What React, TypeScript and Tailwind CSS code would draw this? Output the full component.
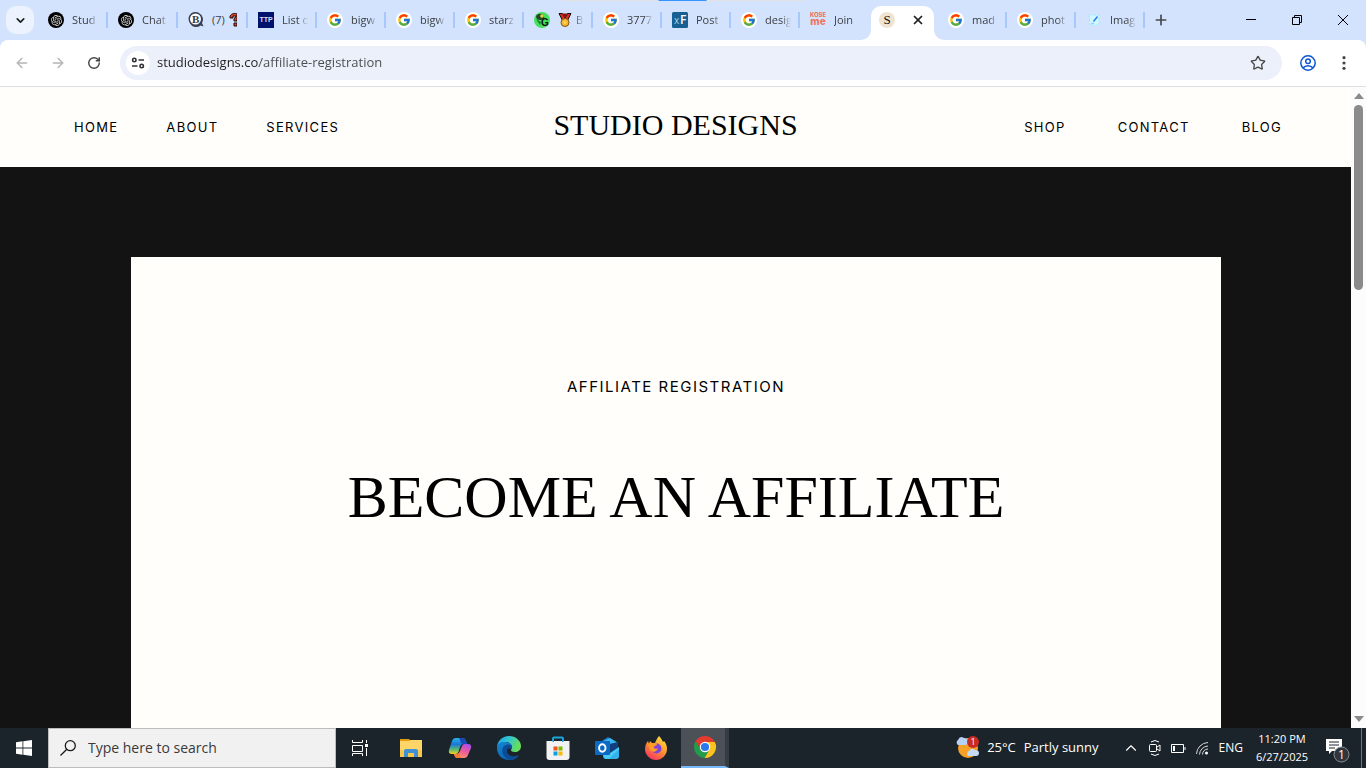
import React from "react";
import { clsx } from "clsx";
import { ArrowLeft, ArrowRight, ChevronDown, ChevronUp, Plus, RotateCw, Star, X } from "lucide-react";
import { FcGoogle } from "react-icons/fc";
import { SiOpenai } from "react-icons/si";

/* ---------- favicons ---------- */

function GoogleIcon() {
  return (
    <span className="flex size-4 items-center justify-center rounded-full bg-white">
      <FcGoogle size={14} />
    </span>
  );
}

function ChatGptIcon() {
  return (
    <span className="flex size-4 items-center justify-center rounded-full bg-black text-[#e0e0e0]">
      <SiOpenai size={11} />
    </span>
  );
}

function BotIcon() {
  return (
    <svg viewBox="0 0 16 16" className="size-4">
      <path d="M3 1.500a7 7 0 0 1 9 .2A7 7 0 0 1 14 11l1.500 3.500-3-1A7 7 0 0 1 2 11.500A7.500 7.500 0 0 1 3 1.500z" fill="#3a4252" />
      <circle cx="7.500" cy="7" r="5.500" fill="#fff" />
      <text x="4" y="11" fontSize="11" fontWeight="700" fontFamily="Liberation Serif, serif" fill="#333c4c">B</text>
    </svg>
  );
}

function TtpIcon() {
  return (
    <svg viewBox="0 0 16 16" className="size-4">
      <rect width="16" height="16" fill="#00126b" />
      <text x="8" y="10" textAnchor="middle" fontSize="7" fontWeight="700" fontFamily="Liberation Sans, sans-serif" fill="#d9def0">TTP</text>
    </svg>
  );
}

function GreenIcon() {
  return (
    <svg viewBox="0 0 16 16" className="size-4">
      <circle cx="8" cy="8" r="8" fill="#46e05c" />
      <path d="M2 4c2-3 7-3 8 0s-2 4-4 4-4-1-4-4z" fill="#26452b" />
      <circle cx="8" cy="4" r="1.800" fill="#e6dc3c" />
      <path d="M2 7l5 3-1 3z" fill="#1b7c2b" />
      <text x="7" y="14" fontSize="10" fontWeight="700" fontFamily="Liberation Sans, sans-serif" fill="#111">G</text>
    </svg>
  );
}

function XenforoIcon() {
  return (
    <svg viewBox="0 0 16 16" className="size-4">
      <rect width="16" height="16" rx="1.500" fill="#176093" />
      <text x="2" y="12" fontSize="10" fontFamily="Open Sans, sans-serif" fill="#a8d4ee">x</text>
      <text x="8" y="12" fontSize="12" fontWeight="600" fontFamily="Open Sans, sans-serif" fill="#fff">F</text>
    </svg>
  );
}

function KasemeIcon() {
  return (
    <svg viewBox="0 0 17 16" className="h-4 w-[17px]">
      <g fill="#ee755f" fontFamily="Inter, sans-serif" fontWeight="800" textAnchor="middle">
        <text x="8" y="5" fontSize="6">KOSE</text>
        <text x="8" y="13" fontSize="10">me</text>
      </g>
    </svg>
  );
}

function StudioIcon() {
  return (
    <svg viewBox="0 0 16 16" className="size-4">
      <circle cx="8" cy="8" r="8" fill="#efe4d2" />
      <text x="8" y="12" textAnchor="middle" fontSize="13" fontFamily="Liberation Serif, serif" fill="#111">S</text>
    </svg>
  );
}

function ImageIcon() {
  return (
    <svg viewBox="0 0 16 16" className="size-4" fill="none">
      <path d="M3 3h10v10H4z" fill="#d3f5ff" stroke="#a8ebfa" strokeDasharray="3 1" />
      <path d="M7.500 9.500l4-5" stroke="#2785e6" strokeWidth="1.500" />
      <path d="M5 12l3-1" stroke="#80c8f5" />
    </svg>
  );
}

function QuestionMark() {
  return (
    <svg viewBox="0 0 8 16" className="ml-1 h-4 w-2 shrink-0">
      <path d="M1 5c0-4 7-4 7-3v7H5V7l2-3H4v2H1z" fill="#f13a1e" stroke="#111" />
      <path d="M5 11h3v3H5z" fill="#f13a1e" stroke="#111" />
    </svg>
  );
}

function Medal() {
  return (
    <svg viewBox="0 0 14 16" className="mr-1 h-4 w-3.5 shrink-0">
      <path d="M1 1.500h3.500L7 6l2.500-4.500H13l-3.500 7h-5z" fill="#dd2b1c" stroke="#111" />
      <path d="M4.500 1.500h5L7 6z" fill="#8e1410" />
      <circle cx="7" cy="10.500" r="4" fill="#f7b92c" stroke="#80511b" />
      <path d="M5.500 9.500h3L7 12.500z" fill="#ffdf70" />
    </svg>
  );
}

/* ---------- browser chrome ---------- */

interface TabInfo {
  icon: React.ReactNode;
  label: React.ReactNode;
  wide?: boolean;
  last?: boolean;
  solid?: boolean;
}

const LEFT_TABS: TabInfo[] = [
  { icon: <ChatGptIcon />, label: "Stud", wide: true },
  { icon: <ChatGptIcon />, label: "Chat", wide: true },
  { icon: <BotIcon />, label: <>(7)<QuestionMark /></>, wide: true, solid: true },
  { icon: <TtpIcon />, label: "List o" },
  { icon: <GoogleIcon />, label: "bigw" },
  { icon: <GoogleIcon />, label: "bigw" },
  { icon: <GoogleIcon />, label: "starz" },
  { icon: <GreenIcon />, label: <><Medal />B</> },
  { icon: <GoogleIcon />, label: "3777" },
  { icon: <XenforoIcon />, label: "Post" },
  { icon: <GoogleIcon />, label: "desig" },
  { icon: <KasemeIcon />, label: "Join", last: true },
];

const RIGHT_TABS: TabInfo[] = [
  { icon: <GoogleIcon />, label: "mad" },
  { icon: <GoogleIcon />, label: "phot" },
  { icon: <ImageIcon />, label: "Imag" },
];

function Tab({ icon, label, wide, last, solid }: TabInfo) {
  return (
    <button type="button" className={clsx("flex shrink-0 items-center pl-2.5", wide ? "w-[70px]" : "w-[69px]")}>
      <span className="w-4 shrink-0">{icon}</span>
      <span
        className={clsx(
          "ml-2 flex w-[26px] items-center overflow-hidden text-[11px] leading-4 whitespace-nowrap text-[#3c4043]",
          !solid && "[mask-image:linear-gradient(90deg,#000_65%,transparent)]"
        )}
      >
        {label}
      </span>
      {!last && <span className="ml-auto h-4 w-0.5 bg-[#a8c7fa]" />}
    </button>
  );
}

function TabStrip() {
  return (
    <div className="relative flex h-10 bg-[#d3e3fd]">
      <div className="absolute top-0 left-1/2 h-px w-[241px] -translate-x-1/2 bg-[#e2e2e2]">
        <div className="ml-24 h-px w-12 bg-[#3794ff]" />
      </div>
      <button type="button" aria-label="Search tabs" className="mt-1.5 mr-1 ml-1.5 flex size-7 shrink-0 items-center justify-center rounded-[10px] bg-[#ecf3fe]">
        <ChevronDown size={13} strokeWidth={3} color="#1f1f1f" />
      </button>
      <div className="flex min-w-0">
        {LEFT_TABS.map((tab, i) => (
          <Tab key={i} {...tab} />
        ))}
        <div className="relative mt-1.5 mr-1 ml-0.5 flex w-[63px] shrink-0 items-center rounded-t-[10px] bg-white pb-1.5 pl-2">
          <svg viewBox="0 0 10 10" className="absolute bottom-0 -left-2.5 size-2.5">
            <path d="M10 0v10H0A10 10 0 0 0 10 0z" fill="#fff" />
          </svg>
          <svg viewBox="0 0 10 10" className="absolute -right-2.5 bottom-0 size-2.5">
            <path d="M0 0v10h10A10 10 0 0 1 0 0z" fill="#fff" />
          </svg>
          <StudioIcon />
          <button type="button" aria-label="Close tab" className="ml-4">
            <X size={14} strokeWidth={3} color="#1f1f1f" />
          </button>
        </div>
        {RIGHT_TABS.map((tab, i) => (
          <Tab key={i} {...tab} />
        ))}
      </div>
      <button type="button" aria-label="New tab" className="ml-2 shrink-0">
        <Plus size={16} strokeWidth={2.5} color="#474747" />
      </button>
      <div className="ml-auto flex shrink-0">
        <button type="button" aria-label="Minimize" className="flex w-[46px] items-center justify-center">
          <svg viewBox="0 0 10 10" className="size-2.5"><path d="M0 4h10v1H0z" /></svg>
        </button>
        <button type="button" aria-label="Restore" className="flex w-[46px] items-center justify-center">
          <svg viewBox="0 0 10 10" className="size-2.5" fill="none" stroke="#000">
            <path d="M.5 2.500h7v7h-7zM2.500 2.500v-2h7v7h-2" />
          </svg>
        </button>
        <button type="button" aria-label="Close" className="flex w-[46px] items-center justify-center">
          <svg viewBox="0 0 10 10" className="size-2.5" stroke="#000"><path d="M0 0l10 10M10 0L0 10" /></svg>
        </button>
      </div>
    </div>
  );
}

function Toolbar() {
  return (
    <div className="bg-[#d3e3fd]">
      <div className="flex h-[47px] items-center rounded-t-lg border-b border-[#dde1e6] bg-white pr-1">
        <button type="button" aria-label="Back" className="flex w-9 justify-center pl-2"><ArrowLeft size={16} color="#b4b4b4" /></button>
        <button type="button" aria-label="Forward" className="flex w-9 justify-center pl-2"><ArrowRight size={16} color="#b4b4b4" /></button>
        <button type="button" aria-label="Reload" className="flex w-9 justify-center pl-2"><RotateCw size={14} strokeWidth={2.5} color="#474747" /></button>
        <div className="ml-3 flex h-[34px] flex-1 items-center rounded-full bg-[#ecf0fa] px-1.5">
          <button type="button" aria-label="Site information" className="flex size-6 items-center justify-center rounded-full bg-white">
            <svg viewBox="0 0 14 14" className="size-3.5" fill="none" stroke="#303236" strokeWidth="1.600">
              <circle cx="3.300" cy="4" r="1.700" /><path d="M7.500 4H13M1 10h5.500" /><circle cx="10.700" cy="10" r="1.700" />
            </svg>
          </button>
          <input
            aria-label="Address"
            defaultValue="studiodesigns.co/affiliate-registration"
            className="ml-[7px] min-w-0 flex-1 bg-[linear-gradient(90deg,#1f1f1f_102px,#474a4e_102px)] bg-clip-text text-[13px] text-transparent caret-black outline-none"
          />
          <button type="button" aria-label="Bookmark" className="mr-2.5"><Star size={16} color="#474747" /></button>
        </div>
        <button type="button" aria-label="Profile" className="ml-2 flex w-9 justify-center">
          <svg viewBox="0 0 16 16" className="size-4" fill="none" stroke="#0b57d0" strokeWidth="1.500">
            <circle cx="8" cy="8" r="7.200" /><circle cx="8" cy="6.200" r="2.300" /><path d="M3 13c2.500-3 7.500-3 10 0" />
          </svg>
        </button>
        <button type="button" aria-label="Menu" className="flex w-9 justify-center">
          <svg viewBox="0 0 4 14" className="h-3.5 w-1" fill="#474747">
            <circle cx="2" cy="1.700" r="1.600" /><circle cx="2" cy="7" r="1.600" /><circle cx="2" cy="12.300" r="1.600" />
          </svg>
        </button>
      </div>
    </div>
  );
}

/* ---------- website ---------- */

function NavLink({ children }: { children: React.ReactNode }) {
  return <a href="#" className="font-[Inter,sans-serif] text-[13px] leading-4 tracking-widest">{children}</a>;
}

function Website() {
  return (
    <main className="flex min-w-0 flex-1 flex-col bg-[#131313] text-black">
      <header className="grid h-20 shrink-0 grid-cols-[1fr_auto_1fr] items-center bg-[#fffefa]">
        <nav className="flex gap-12 pl-[74px]">
          <NavLink>HOME</NavLink>
          <NavLink>ABOUT</NavLink>
          <NavLink>SERVICES</NavLink>
        </nav>
        <a href="#" className="pb-1 font-['Liberation_Serif',serif] text-[30px] leading-9">STUDIO DESIGNS</a>
        <nav className="flex justify-end gap-[52px] pr-[69px]">
          <NavLink>SHOP</NavLink>
          <NavLink>CONTACT</NavLink>
          <NavLink>BLOG</NavLink>
        </nav>
      </header>
      <section className="mt-[90px] mr-[130px] ml-[131px] flex-1 bg-[#fffefa] pt-[120px] text-center">
        <p className="font-[Inter,sans-serif] text-[15px] leading-5 tracking-widest">AFFILIATE REGISTRATION</p>
        <h1 className="mt-16 font-['Liberation_Serif',serif] text-[60px] leading-[72px]">BECOME AN AFFILIATE</h1>
      </section>
    </main>
  );
}

function Scrollbar() {
  return (
    <div className="flex w-[15px] shrink-0 flex-col items-center bg-[#fcfcfc] py-1.5">
      <svg viewBox="0 0 10 6" className="h-1.5 w-2.5"><path d="M5 0l5 6H0z" fill="#8b8b8b" /></svg>
      <div className="mt-1.5 h-[185px] w-[9px] rounded-full bg-[#8b8b8b]" />
      <svg viewBox="0 0 10 6" className="mt-auto h-1.5 w-2.5"><path d="M5 6l5-6H0z" fill="#8b8b8b" /></svg>
    </div>
  );
}

/* ---------- taskbar ---------- */

function ExplorerIcon() {
  return (
    <svg viewBox="0 0 24 24" className="size-6">
      <path d="M1 3h9l2 2H1z" fill="#e39b12" />
      <path d="M1 5h9l1.500-1H23v17H1z" fill="#ffd567" />
      <path d="M1 14h22v7H1z" fill="#fac74e" />
      <path d="M5 21v-6q0-2 2-2h10q2 0 2 2v6h-4v-4H9v4z" fill="#3f91d4" />
    </svg>
  );
}

function CopilotIcon() {
  return (
    <svg viewBox="0 0 24 24" className="size-6">
      <defs>
        <linearGradient id="cpA" x1="0" y1="0" x2="0" y2="1">
          <stop stopColor="#28b4e8" /><stop offset=".4" stopColor="#1b76d8" /><stop offset=".75" stopColor="#62bf68" /><stop offset="1" stopColor="#ffd01f" />
        </linearGradient>
        <linearGradient id="cpB" x1="0.700" y1="0" x2="0.300" y2="1">
          <stop stopColor="#a94de8" /><stop offset=".5" stopColor="#ee5b9b" /><stop offset="1" stopColor="#ff9860" />
        </linearGradient>
      </defs>
      <path d="M8 2h7q2 0 3 3l1 3h-4q-2 0-3 3l-1.500 5q-1 2-3 2H4q-4 0-3-4L4 5q1-3 4-3z" fill="url(#cpA)" />
      <path d="M11 2h4q2 0 3 3l1 3h-4l-2-1q-1-4-2-5z" fill="#1948b8" />
      <path d="M16 8h4q4 0 3 4l-3 7q-1 3-4 3H9q-2 0-3-4h3q2 0 3-3l2-5q1-2 2-2z" fill="url(#cpB)" />
      <path d="M6 18h3q1 0 2-1l2 5H9q-2 0-3-4z" fill="#f5793b" />
    </svg>
  );
}

function EdgeIcon() {
  return (
    <svg viewBox="0 0 24 24" className="size-6">
      <defs>
        <linearGradient id="edA" x1="0" y1="0" x2="1" y2="0.300">
          <stop stopColor="#1ba3df" /><stop offset=".5" stopColor="#31c4d3" /><stop offset="1" stopColor="#68df58" />
        </linearGradient>
        <linearGradient id="edB" x1="0" y1="0" x2="0.500" y2="1">
          <stop stopColor="#1687d4" /><stop offset="1" stopColor="#0963b1" />
        </linearGradient>
      </defs>
      <path d="M0 12C0 5 5 0 12 0s12 5 12 10c0 4-3 6-6 6-3 0-4-1-4-2s1-1 1-3c0-3-3-5-7-5-4 0-8 3-8 6z" fill="url(#edA)" />
      <path d="M0 12c0-4 3-6 7-6 5 0 8 2 8 5l-1 2c-1-2-5-1-5 2 0 4 5 7 11 5l2-1c-2 3-5 5-10 5C5 24 0 19 0 12z" fill="url(#edB)" />
      <path d="M9 9c-3 1-5 5-3 9 1 3 4 5 7 6 4 0 7-2 9-5-5 3-12 1-12-4 0-2 1-3 2-3 1 0 2 0 2 1l1-2c0-2-3-3-6-2z" fill="#0c4c96" />
    </svg>
  );
}

function StoreIcon() {
  return (
    <svg viewBox="0 0 24 24" className="size-6">
      <path d="M7 7V2.500Q7 1.500 8 1.500h8q1 0 1 1V7" fill="none" stroke="#1aa5dd" strokeWidth="1.800" />
      <path d="M.5 5h23v16q0 3-3 3h-17q-3 0-3-3z" fill="#f2f2f2" />
      <path d="M6.500 2h1.500v4H6.500zM16 2h1.500v4H16z" fill="#1aa5dd" />
      <path d="M7.500 10.500h4v4h-4z" fill="#f15123" />
      <path d="M12.500 10.500h4v4h-4z" fill="#7fb900" />
      <path d="M7.500 15.500h4v4h-4z" fill="#02a2eb" />
      <path d="M12.500 15.500h4v4h-4z" fill="#ffb800" />
    </svg>
  );
}

function OutlookIcon() {
  return (
    <svg viewBox="0 0 24 24" className="size-6">
      <path d="M2 8L13 1l10 6v6H2z" fill="#1874c4" />
      <path d="M6 6l9-4 8 5-11 7z" fill="#39b8ef" />
      <path d="M10 9l13-3v7l-8 4z" fill="#123f7f" />
      <path d="M8 14l7 3 9-6v8q0 4-4 4H11q-3 0-3-4z" fill="#45cdf8" />
      <path d="M14 23l10-10v7q0 3-4 3z" fill="#35b0ee" />
      <rect y="5" width="15" height="14" rx="1" fill="#0c6ac4" />
      <ellipse cx="7.300" cy="12" rx="3.200" ry="3.700" fill="none" stroke="#fff" strokeWidth="1.900" />
    </svg>
  );
}

function FirefoxIcon() {
  return (
    <svg viewBox="0 0 24 24" className="size-6">
      <defs>
        <linearGradient id="ffA" x1="0.800" y1="0" x2="0.200" y2="1">
          <stop stopColor="#ffe73d" /><stop offset=".45" stopColor="#ff982c" /><stop offset="1" stopColor="#f52c67" />
        </linearGradient>
      </defs>
      <path d="M15 0c2 2 3 4 4 6l1-1c2 2 3 5 3 8 0 6-5 11-11 11S1 19 1 13c0-3 1-6 3-8l1 3 1-3 2 2h3c1-2 2-5 4-7z" fill="url(#ffA)" />
      <circle cx="12.500" cy="12.500" r="5" fill="#8142d8" />
      <path d="M4 8c3-2 5 0 8-1l1 2c-1 1-4 1-3 3 1 1 3 1 4 0-1 4-5 5-8 2z" fill="#ff9c22" />
    </svg>
  );
}

function ChromeIcon() {
  return (
    <svg viewBox="0 0 48 48" className="size-6">
      <path d="M24 14h19.600A22 22 0 0 1 22.860 45.970L32.660 29z" fill="#fcc31e" />
      <path d="M32.660 29L22.860 45.970A22 22 0 0 1 5.540 12.030L15.340 29z" fill="#229b4b" />
      <path d="M15.340 29L5.540 12.030A22 22 0 0 1 43.600 14H24z" fill="#e33b2e" />
      <circle cx="24" cy="24" r="10.500" fill="#fff" />
      <circle cx="24" cy="24" r="8.200" fill="#2b78ed" />
    </svg>
  );
}

function TaskViewIcon() {
  return (
    <svg viewBox="0 0 16 16" className="size-4" fill="none" stroke="#fff">
      <path d="M.5 0v2.500h10V0M.5 5.500h10v6H.5zM.5 16v-2.500h10V16M14.500 0v3M14.500 8v8" />
      <path d="M13 4h3v3h-3z" fill="#fff" stroke="none" />
    </svg>
  );
}

const APPS = [
  { name: "File Explorer", icon: <ExplorerIcon /> },
  { name: "Copilot", icon: <CopilotIcon /> },
  { name: "Microsoft Edge", icon: <EdgeIcon /> },
  { name: "Microsoft Store", icon: <StoreIcon /> },
  { name: "Outlook", icon: <OutlookIcon /> },
  { name: "Firefox", icon: <FirefoxIcon /> },
];

function Tray() {
  return (
    <div className="ml-auto flex shrink-0 items-center text-white">
      <button type="button" className="flex items-center text-[13px]">
        <svg viewBox="0 0 24 24" className="mr-2 size-6">
          <circle cx="13" cy="12" r="10" fill="#f5a026" />
          <path d="M3 9a3 3 0 0 1 0-5q2-5 6-2 4 0 4 4 0 3-3 3z" fill="#b7d1f4" />
          <path d="M13 20a3 3 0 0 1 1-5q3-4 6-1 4 0 4 3 0 3-3 3z" fill="#c7daf5" />
          <circle cx="18" cy="6" r="6" fill="#c82b20" />
          <text x="18" y="9" textAnchor="middle" fontSize="9" fontFamily="Open Sans, sans-serif" fill="#fff">1</text>
        </svg>
        <span>25°C</span>
        <span className="ml-2">Partly sunny</span>
      </button>
      <button type="button" aria-label="Show hidden icons" className="ml-5 flex w-6 justify-center"><ChevronUp size={18} strokeWidth={1.5} /></button>
      <button type="button" aria-label="Meet now" className="flex w-6 justify-center">
        <svg viewBox="0 0 12 16" className="h-4 w-3" fill="none" stroke="#fff">
          <rect x=".5" y="4.500" width="7" height="7" rx="1" /><path d="M8 7l3-2v6l-3-2M2 2q4-3 8 0M2 14q4 3 8 0" />
        </svg>
      </button>
      <button type="button" aria-label="Battery" className="flex w-6 justify-center">
        <svg viewBox="0 0 15 9" className="h-[9px] w-[15px]" fill="none" stroke="#fff">
          <path d="M.5.500h12v8H.500zM14 3v3" /><path d="M2 2h2v5H2z" fill="#fff" stroke="none" />
        </svg>
      </button>
      <button type="button" aria-label="Network" className="flex w-6 justify-center">
        <svg viewBox="0 0 13 13" className="size-[13px]" fill="none" stroke="#d5d8da">
          <path d="M.5 12A12 12 0 0 1 12 .5M3.500 12.500A9 9 0 0 1 12 4M6.500 12.500A6 6 0 0 1 12 7" />
          <circle cx="10.500" cy="11" r="1.500" fill="#fff" stroke="none" />
        </svg>
      </button>
      <button type="button" className="ml-1 text-xs">ENG</button>
      <button type="button" className="ml-1 w-[70px] text-center text-[11px] leading-[18px]">
        11:20 PM
        <br />
        6/27/2025
      </button>
      <button type="button" aria-label="Notifications" className="ml-2 flex w-9 justify-start">
        <svg viewBox="0 0 26 26" className="mt-1 size-[26px]">
          <path d="M1 2h16v12H7l-3 3v-3H1z" fill="#fff" />
          <path d="M4 5h10M4 8h10M4 11h6" stroke="#1c242b" />
          <circle cx="16.500" cy="17.500" r="7.500" fill="#30363a" stroke="#899095" />
          <text x="16.500" y="22" textAnchor="middle" fontSize="12" fontFamily="Open Sans, sans-serif" fill="#fff">1</text>
        </svg>
      </button>
      <div className="mr-1 h-10 w-px bg-[#6d7378]" />
    </div>
  );
}

function Taskbar() {
  return (
    <footer className="flex h-10 shrink-0 bg-[#1c242b]">
      <button type="button" aria-label="Start" className="flex w-12 shrink-0 items-center justify-center">
        <svg viewBox="0 0 16 16" className="size-4" fill="#fff">
          <path d="M0 2.200L6.500 1.300v6.300H0zM7.300 1.200L16 0v7.600H7.300zM0 8.400h6.500v6.300L0 13.800zM7.300 8.400H16V16l-8.700-1.200z" />
        </svg>
      </button>
      <label className="flex w-72 shrink items-center border border-[#bdbdbd] bg-[#f1f1f1] pl-[11px]">
        <svg viewBox="0 0 16 16" className="size-4 shrink-0" fill="none" stroke="#1a1a1a" strokeWidth="1.300">
          <circle cx="10.300" cy="5.700" r="5" /><path d="M6.800 9.200L.5 15.500" />
        </svg>
        <input aria-label="Type here to search" placeholder="Type here to search" className="ml-3 min-w-0 flex-1 text-sm outline-none placeholder:text-[#3a3a3a]" />
      </label>
      <button type="button" aria-label="Task view" className="mr-[3px] flex w-12 shrink-0 items-center justify-center"><TaskViewIcon /></button>
      <div className="flex shrink-0 gap-px">
        {APPS.map((app) => (
          <button key={app.name} type="button" aria-label={app.name} className="flex w-12 items-center justify-center">{app.icon}</button>
        ))}
        <button type="button" aria-label="Google Chrome" className="flex w-12 items-center justify-center border-r-4 border-b-2 border-r-[#353c42] border-b-[#76b9ff] bg-[#4b5157] pl-1">
          <ChromeIcon />
        </button>
      </div>
      <Tray />
    </footer>
  );
}

export default function App() {
  return (
    <div className="flex h-screen flex-col overflow-hidden font-['Open_Sans',sans-serif]">
      <TabStrip />
      <Toolbar />
      <div className="flex min-h-0 flex-1">
        <Website />
        <Scrollbar />
      </div>
      <Taskbar />
    </div>
  );
}
